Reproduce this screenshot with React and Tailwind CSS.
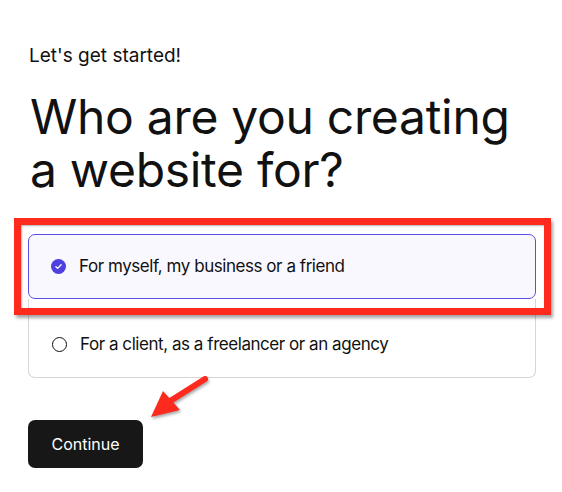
import React from "react";

const RED = "#fe2a1d";

const CheckedRadio = () => (
  <svg width="15" height="15" viewBox="0 0 16 16" className="shrink-0">
    <circle cx="8" cy="8" r="8" fill="#4d3fe0" />
    <path d="M5.2 8.2 L7.1 10 L10.8 6.2" fill="none" stroke="#fff" strokeWidth="1.4" strokeLinecap="round" strokeLinejoin="round" />
  </svg>
);

const EmptyRadio = () => (
  <span className="block w-[15px] h-[15px] shrink-0 rounded-full border-[1.5px] border-[#111]" />
);

const Arrow = () => (
  <svg
    width="80"
    height="60"
    viewBox="0 0 80 60"
    className="absolute left-[140px] top-[368px] pointer-events-none"
    style={{ filter: "drop-shadow(1px 2px 1.5px rgba(0,0,0,0.35))" }}
  >
    {/* shaft */}
    <path d="M65 11 L27 35" stroke={RED} strokeWidth="6" strokeLinecap="round" />
    {/* head */}
    <path d="M11 49 L23 23 L40 42 Z" fill={RED} />
  </svg>
);

export default function App() {
  return (
    <div
      className="relative min-h-[492px] bg-white text-[#111] px-[28px] pt-[44px]"
      style={{ fontFamily: "Inter, 'Noto Sans', sans-serif" }}
    >
      <p className="text-[19px] leading-[24px] pl-px">Let's get started!</p>

      <h1 className="mt-[22px] text-[48px] leading-[53px] font-normal tracking-[-0.3px] pl-[2px]">
        Who are you creating
        <br />a website for?
      </h1>

      {/* options */}
      <div className="relative mt-[38px] w-[508px]">
        <div className="flex items-center gap-[13px] h-[65px] px-[22px] rounded-[7px] border border-[#5b4fe3] bg-[#f9f8ff]">
          <CheckedRadio />
          <span className="text-[17px] tracking-[-0.45px]">For myself, my business or a friend</span>
        </div>
        <div className="flex items-center gap-[13px] h-[79px] pt-[13px] px-[23px] rounded-b-[7px] border-x border-b border-[#d6d6d6]">
          <EmptyRadio />
          <span className="text-[17px] tracking-[-0.45px]">For a client, as a freelancer or an agency</span>
        </div>

        {/* red highlight box */}
        <div
          className="absolute left-[-14px] top-[-16px] w-[537px] h-[97px] border-[7px] pointer-events-none"
          style={{ borderColor: RED, boxShadow: "2px 3px 3px rgba(0,0,0,0.35), inset 1px 1px 2px rgba(0,0,0,0.3)" }}
        />
      </div>

      <button className="mt-[42px] w-[115px] h-[48px] rounded-[7px] bg-[#171717] text-white text-[16px]">
        Continue
      </button>

      <Arrow />
    </div>
  );
}
